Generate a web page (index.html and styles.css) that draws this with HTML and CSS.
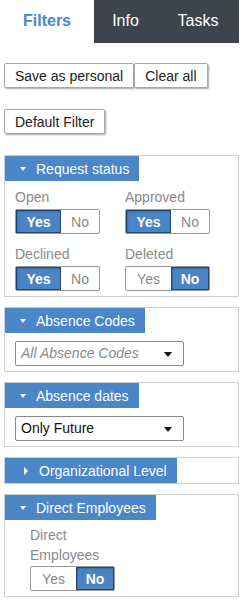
FILE: index.html
```html
<!DOCTYPE html>
<html>
<head>
  <title>Filters</title>
  <link rel="stylesheet" href="styles.css">
</head>
<body>
  <nav class="tabs">
    <div class="tab active">Filters</div>
    <div class="tab info">Info</div>
    <div class="tab tasks">Tasks</div>
  </nav>

  <div class="content">
    <div class="btn-row">
      <button class="btn">Save as personal</button><button class="btn">Clear all</button>
    </div>
    <div class="btn-row second">
      <button class="btn">Default Filter</button>
    </div>

    <div class="panel">
      <div class="panel-head"><span class="caret down"></span>Request status</div>
      <div class="panel-body status-grid">
        <div class="field">
          <div class="label">Open</div>
          <div class="toggle"><span class="opt yes on">Yes</span><span class="opt no">No</span></div>
        </div>
        <div class="field">
          <div class="label">Approved</div>
          <div class="toggle"><span class="opt yes on">Yes</span><span class="opt no">No</span></div>
        </div>
        <div class="field">
          <div class="label">Declined</div>
          <div class="toggle"><span class="opt yes on">Yes</span><span class="opt no">No</span></div>
        </div>
        <div class="field">
          <div class="label">Deleted</div>
          <div class="toggle"><span class="opt yes">Yes</span><span class="opt no on">No</span></div>
        </div>
      </div>
    </div>

    <div class="panel">
      <div class="panel-head"><span class="caret down"></span>Absence Codes</div>
      <div class="panel-body">
        <div class="select placeholder">All Absence Codes<span class="sel-arrow"></span></div>
      </div>
    </div>

    <div class="panel">
      <div class="panel-head"><span class="caret down"></span>Absence dates</div>
      <div class="panel-body">
        <div class="select">Only Future<span class="sel-arrow"></span></div>
      </div>
    </div>

    <div class="panel collapsed">
      <div class="panel-head"><span class="caret right"></span>Organizational Level</div>
    </div>

    <div class="panel">
      <div class="panel-head"><span class="caret down"></span>Direct Employees</div>
      <div class="panel-body indent">
        <div class="field narrow">
          <div class="label">Direct Employees</div>
          <div class="toggle"><span class="opt yes">Yes</span><span class="opt no on">No</span></div>
        </div>
      </div>
    </div>
  </div>
</body>
</html>
```

FILE: styles.css
```css
body {
  font-family: "Liberation Sans", Arial, sans-serif;
  margin: 0;
  padding: 0;
  background-color: #fff;
  width: 243px;
}

.tabs {
  display: flex;
  width: 239px;
  height: 43px;
  background-color: #3d444c;
}

.tab {
  color: #fff;
  font-size: 16px;
  line-height: 41px;
  text-align: center;
}

.tab.active {
  width: 94px;
  background-color: #fff;
  color: #4a86c8;
  font-weight: bold;
}

.tab.info {
  width: 63px;
}

.tab.tasks {
  flex: 1;
}

.content {
  padding: 0 4px;
}

.btn-row {
  display: flex;
  margin-top: 20px;
}

.btn-row.second {
  margin-top: 21px;
}

.btn {
  height: 25px;
  padding: 0 10px;
  font-family: inherit;
  font-size: 14px;
  color: #222;
  background-color: #fff;
  border: 1px solid #a8a8a8;
  border-radius: 2px;
  box-shadow: 1px 1px 2px rgba(0,0,0,0.35);
}

.panel {
  width: 235px;
  box-sizing: border-box;
  border: 1px solid #cfcfcf;
  margin-top: 10px;
}

.btn-row.second + .panel {
  margin-top: 21px;
}

.panel-head {
  display: inline-flex;
  align-items: center;
  height: 25px;
  padding: 0 10px 0 15px;
  background-color: #4a86c8;
  color: #fff;
  font-size: 14px;
  vertical-align: top;
}

.caret {
  display: inline-block;
  width: 0;
  height: 0;
  margin-right: 10px;
}

.caret.down {
  border-left: 3px solid transparent;
  border-right: 3px solid transparent;
  border-top: 4px solid #fff;
  margin-top: 1px;
}

.caret.right {
  border-top: 4px solid transparent;
  border-bottom: 4px solid transparent;
  border-left: 4px solid #fff;
  margin-left: 4px;
  margin-right: 11px;
}

.collapsed .panel-head {
  display: flex;
  width: 172px;
  box-sizing: border-box;
}

.panel-body {
  padding: 8px 10px 5px 10px;
}

.status-grid {
  display: grid;
  grid-template-columns: 110px 1fr;
  row-gap: 11px;
  padding-top: 7px;
  padding-bottom: 5px;
}

.label {
  color: #8a8a8a;
  font-size: 14px;
  line-height: 18px;
  margin-bottom: 3px;
}

.toggle {
  display: inline-flex;
  height: 25px;
  border: 1px solid #9a9a9a;
  border-radius: 2px;
  box-sizing: border-box;
  font-size: 14px;
  vertical-align: top;
}

.opt {
  display: flex;
  align-items: center;
  justify-content: center;
  color: #888;
}

.opt.yes {
  width: 45px;
}

.opt.no {
  width: 38px;
}

.opt.on {
  background-color: #4a84c4;
  color: #fff;
  font-weight: bold;
  box-shadow: inset 0 0 0 1px #24466e, inset 1px 1px 2px #1f3a5c;
}

.select {
  position: relative;
  width: 169px;
  height: 25px;
  box-sizing: border-box;
  border: 1px solid #8a8a8a;
  border-radius: 2px;
  padding-left: 5px;
  font-size: 14px;
  line-height: 23px;
  color: #111;
}

.select.placeholder {
  color: #8a8a8a;
  font-style: italic;
}

.sel-arrow {
  position: absolute;
  right: 11px;
  top: 10px;
  width: 0;
  height: 0;
  border-left: 4px solid transparent;
  border-right: 4px solid transparent;
  border-top: 5px solid #111;
}

.indent {
  padding-left: 25px;
  padding-top: 5px;
}

.narrow {
  width: 90px;
  font-size: 0;
}

.narrow .label {
  line-height: 20px;
  margin-bottom: 1px;
}
```
